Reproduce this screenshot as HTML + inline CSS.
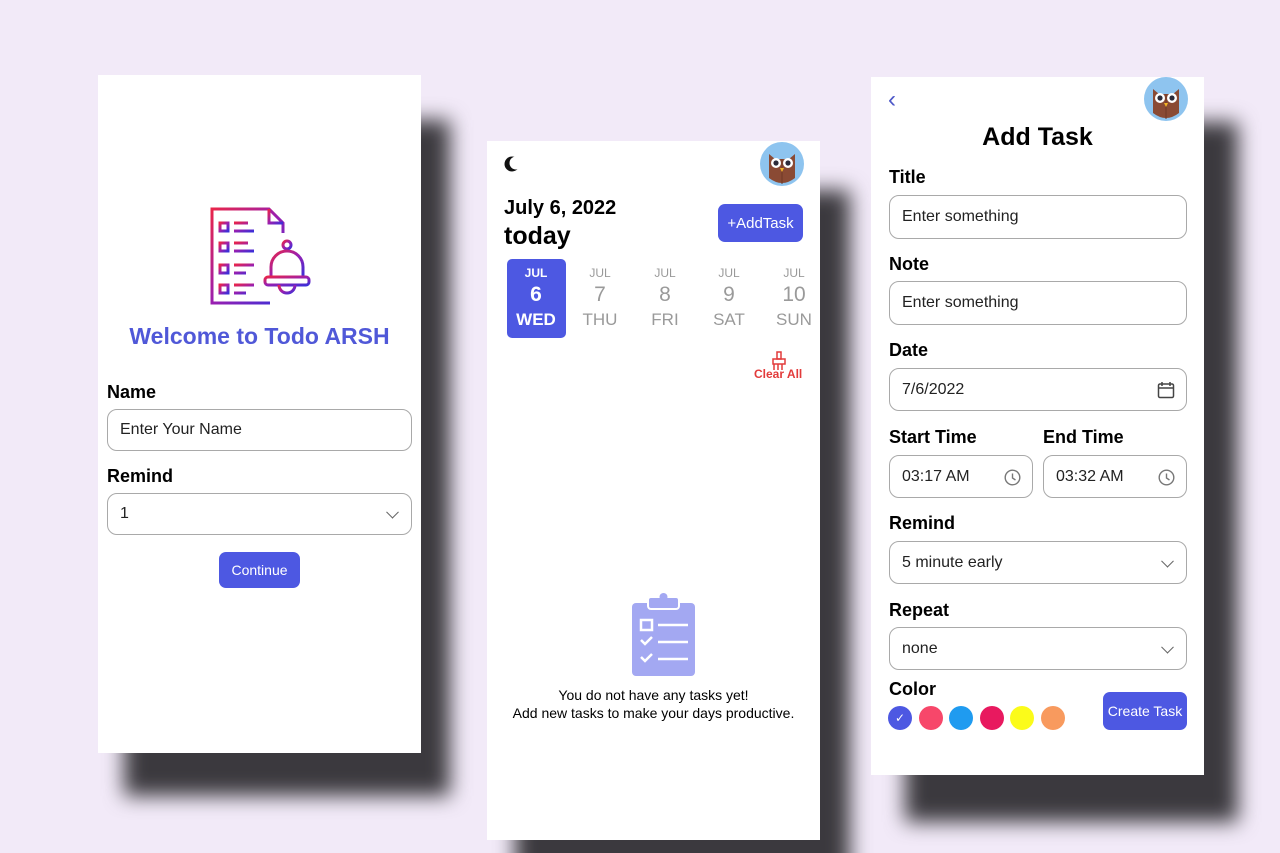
<!DOCTYPE html>
<html style="overflow:hidden;width:1280px;height:853px"><head><meta charset="utf-8"><style>
*{box-sizing:border-box;margin:0;padding:0}
body{width:1280px;height:853px;background:#f2eaf8;position:relative;overflow:hidden;font-family:"Liberation Sans",Roboto,sans-serif;color:#000}
.a{position:absolute}
.sh{position:absolute;background:#3b393e;filter:blur(10px)}
.card{position:absolute;background:#fff}
.lbl{position:absolute;font-size:18px;font-weight:bold}
.inp{position:absolute;border:1px solid #a9a9a9;border-radius:10px;font-size:16px;padding-left:12px;display:flex;align-items:center;color:#222}
.btn{position:absolute;background:#4d58e2;color:#fff;border-radius:7px;display:flex;align-items:center;justify-content:center;font-size:14px}
.chev{position:absolute;right:14px;top:50%;width:9px;height:9px;border-right:1.6px solid #666;border-bottom:1.6px solid #666;transform:translateY(-70%) rotate(45deg)}
.col{position:absolute;width:50px;text-align:center;color:#9a9a9a}
.col .n{font-size:21px;margin-top:3px}
.col .d{font-size:17px;margin-top:3px}
.dot{position:absolute;width:24px;height:24px;border-radius:50%}
</style></head><body>

<div class="sh" style="left:124px;top:120px;width:326px;height:676px"></div>
<div class="sh" style="left:515px;top:190px;width:335px;height:700px"></div>
<div class="sh" style="left:905px;top:122px;width:333px;height:700px"></div>

<!-- LEFT -->
<div class="card" style="left:98px;top:75px;width:323px;height:678px"></div>
<svg class="a" style="left:208px;top:205px" width="104" height="104" viewBox="0 0 104 104" fill="none" stroke-width="3">
<defs><linearGradient id="g" x1="0" y1="0" x2="1" y2="1"><stop offset="0" stop-color="#e8254a"/><stop offset="0.5" stop-color="#9a1fb0"/><stop offset="1" stop-color="#3b2fd8"/></linearGradient></defs>
<g stroke="url(#g)">
<path d="M62 98H4V4h57l14 14v10"/><path d="M61 4v14h14"/>
<rect x="12" y="18" width="8" height="8"/><path d="M26 18h14M26 26h20"/>
<rect x="12" y="38" width="8" height="8"/><path d="M26 38h14M26 46h20"/>
<rect x="12" y="60" width="8" height="8"/><path d="M26 60h20M26 68h12"/>
<rect x="12" y="80" width="8" height="8"/><path d="M26 80h20M26 88h12"/>
<circle cx="79" cy="40" r="4"/><path d="M63 72V62a16 16 0 0 1 32 0v10"/><rect x="57" y="72" width="44" height="8" rx="3"/><path d="M71 80a8 8 0 0 0 16 0"/>
</g></svg>
<div class="a" style="left:98px;width:323px;top:323px;text-align:center;font-size:23px;font-weight:bold;color:#5058d8">Welcome to Todo ARSH</div>
<div class="lbl" style="left:107px;top:382px">Name</div>
<div class="inp" style="left:107px;top:409px;width:305px;height:42px">Enter Your Name</div>
<div class="lbl" style="left:107px;top:466px">Remind</div>
<div class="inp" style="left:107px;top:493px;width:305px;height:42px">1<span class="chev"></span></div>
<div class="btn" style="left:219px;top:552px;width:81px;height:36px">Continue</div>

<!-- MIDDLE -->
<div class="card" style="left:487px;top:141px;width:333px;height:699px"></div>
<svg class="a" style="left:504px;top:155px" width="16" height="18" viewBox="0 0 16 18"><circle cx="8" cy="9" r="7.5" fill="#111"/><circle cx="12" cy="8" r="6.5" fill="#fff"/></svg>
<svg class="a" style="left:760px;top:142px" width="44" height="44" viewBox="0 0 44 44"><circle cx="22" cy="22" r="22" fill="#8ec4ef"/><path d="M9 12l6 5h14l6-5v24q-13 10-26 0z" fill="#8a4a34"/><path d="M22 17v25" stroke="#6e3826" stroke-width="1"/><circle cx="16" cy="21" r="5" fill="#fff"/><circle cx="28" cy="21" r="5" fill="#fff"/><circle cx="16" cy="21" r="2.6" fill="#2b2b3a"/><circle cx="28" cy="21" r="2.6" fill="#2b2b3a"/><path d="M20 26h4l-2 4z" fill="#f3b526"/></svg>
<div class="a" style="left:504px;top:197px;font-size:20px;font-weight:bold">July 6, 2022</div>
<div class="a" style="left:504px;top:222px;font-size:25px;font-weight:bold">today</div>
<div class="btn" style="left:718px;top:204px;width:85px;height:38px;font-size:15px">+AddTask</div>
<div class="a" style="left:507px;top:259px;width:59px;height:79px;background:#4d58e2;border-radius:5px"></div>
<div class="col" style="left:511px;top:266px;color:#fff;font-weight:bold"><div style="font-size:12px">JUL</div><div class="n">6</div><div class="d">WED</div></div>
<div class="col" style="left:575px;top:266px"><div style="font-size:12px">JUL</div><div class="n">7</div><div class="d">THU</div></div>
<div class="col" style="left:640px;top:266px"><div style="font-size:12px">JUL</div><div class="n">8</div><div class="d">FRI</div></div>
<div class="col" style="left:704px;top:266px"><div style="font-size:12px">JUL</div><div class="n">9</div><div class="d">SAT</div></div>
<div class="col" style="left:769px;top:266px"><div style="font-size:12px">JUL</div><div class="n">10</div><div class="d">SUN</div></div>
<svg class="a" style="left:770px;top:351px" width="18" height="20" viewBox="0 0 18 20" fill="none" stroke="#e23b3b" stroke-width="1.5"><rect x="7" y="1" width="4" height="7"/><path d="M3 8h12v5H3zM4 13v6M8 13v6M12 13v6"/></svg>
<div class="a" style="left:754px;top:367px;font-size:12px;font-weight:bold;color:#e23b3b">Clear All</div>
<svg class="a" style="left:632px;top:593px" width="64" height="84" viewBox="0 0 64 84"><rect x="0" y="10" width="63" height="73" rx="4" fill="#a3a8f2"/><rect x="16" y="4" width="31" height="12" rx="3" fill="#a3a8f2" stroke="#fff" stroke-width="2"/><circle cx="31.5" cy="4" r="4" fill="#a3a8f2"/><g stroke="#fff" stroke-width="2.5" fill="none"><rect x="9" y="27" width="11" height="10"/><path d="M26 32h30M26 49h30M26 66h30M9 47l4 4 7-7M9 64l4 4 7-7"/></g></svg>
<div class="a" style="left:487px;width:333px;top:686px;text-align:center;font-size:14px;line-height:18px">You do not have any tasks yet!<br>Add new tasks to make your days productive.</div>

<!-- RIGHT -->
<div class="card" style="left:871px;top:77px;width:333px;height:698px"></div>
<div class="a" style="left:888px;top:86px;font-size:24px;color:#4d58c8">&#8249;</div>
<svg class="a" style="left:1144px;top:77px" width="44" height="44" viewBox="0 0 44 44"><circle cx="22" cy="22" r="22" fill="#8ec4ef"/><path d="M9 12l6 5h14l6-5v24q-13 10-26 0z" fill="#8a4a34"/><path d="M22 17v25" stroke="#6e3826" stroke-width="1"/><circle cx="16" cy="21" r="5" fill="#fff"/><circle cx="28" cy="21" r="5" fill="#fff"/><circle cx="16" cy="21" r="2.6" fill="#2b2b3a"/><circle cx="28" cy="21" r="2.6" fill="#2b2b3a"/><path d="M20 26h4l-2 4z" fill="#f3b526"/></svg>
<div class="a" style="left:871px;width:333px;top:123px;text-align:center;font-size:25px;font-weight:bold">Add Task</div>
<div class="lbl" style="left:889px;top:167px">Title</div>
<div class="inp" style="left:889px;top:195px;width:298px;height:44px">Enter something</div>
<div class="lbl" style="left:889px;top:254px">Note</div>
<div class="inp" style="left:889px;top:281px;width:298px;height:44px">Enter something</div>
<div class="lbl" style="left:889px;top:340px">Date</div>
<div class="inp" style="left:889px;top:368px;width:298px;height:43px">7/6/2022
<svg class="a" style="right:11px;top:12px" width="18" height="18" viewBox="0 0 18 18" fill="none" stroke="#444" stroke-width="1.5"><rect x="1.5" y="3" width="15" height="13.5" rx="1.5"/><path d="M1.5 7h15M5 1v4M13 1v4"/></svg></div>
<div class="lbl" style="left:889px;top:427px">Start Time</div>
<div class="lbl" style="left:1043px;top:427px">End Time</div>
<div class="inp" style="left:889px;top:455px;width:144px;height:43px">03:17 AM<svg class="a" style="right:11px;top:13px" width="17" height="17" viewBox="0 0 17 17" fill="none" stroke="#777" stroke-width="1.4"><circle cx="8.5" cy="8.5" r="7.3"/><path d="M8.5 4.5v4.5l3 2"/></svg></div>
<div class="inp" style="left:1043px;top:455px;width:144px;height:43px">03:32 AM<svg class="a" style="right:11px;top:13px" width="17" height="17" viewBox="0 0 17 17" fill="none" stroke="#777" stroke-width="1.4"><circle cx="8.5" cy="8.5" r="7.3"/><path d="M8.5 4.5v4.5l3 2"/></svg></div>
<div class="lbl" style="left:889px;top:513px">Remind</div>
<div class="inp" style="left:889px;top:541px;width:298px;height:43px">5 minute early<span class="chev"></span></div>
<div class="lbl" style="left:889px;top:600px">Repeat</div>
<div class="inp" style="left:889px;top:627px;width:298px;height:43px">none<span class="chev"></span></div>
<div class="lbl" style="left:889px;top:679px">Color</div>
<div class="dot" style="left:888px;top:706px;background:#4d58e2;color:#fff;font-size:12px;text-align:center;line-height:24px">&#10003;</div>
<div class="dot" style="left:919px;top:706px;background:#f7476a"></div>
<div class="dot" style="left:949px;top:706px;background:#1f9bf0"></div>
<div class="dot" style="left:980px;top:706px;background:#e8195f"></div>
<div class="dot" style="left:1010px;top:706px;background:#fbfb1a"></div>
<div class="dot" style="left:1041px;top:706px;background:#f89a5e"></div>
<div class="btn" style="left:1103px;top:692px;width:84px;height:38px;font-size:14px">Create Task</div>
</body></html>
